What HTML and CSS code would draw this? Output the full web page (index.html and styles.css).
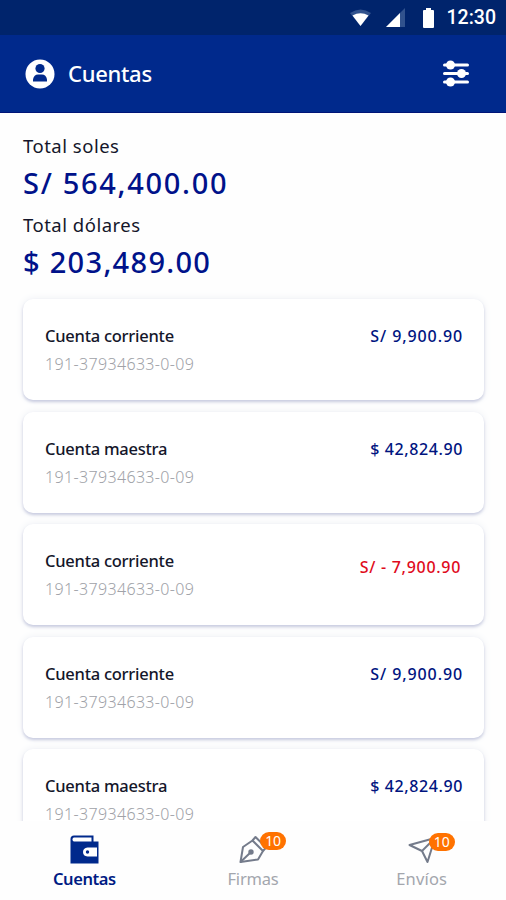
FILE: index.html
```html
<!DOCTYPE html>
<html lang="es">
<head>
  <meta charset="UTF-8">
  <title>Cuentas</title>
  <link rel="stylesheet" href="styles.css">
</head>
<body>

  <div class="status-bar">
    <svg class="wifi" width="21" height="17" viewBox="0 0 21 17">
      <path d="M0 4Q10.500-3 21 4L10.500 17Z" fill="#31528d"/>
      <path d="M2.500 6.500Q10.500 2 18.500 6.500L10.500 17Z" fill="#fff"/>
    </svg>
    <svg class="signal" width="19" height="19" viewBox="0 0 19 19">
      <path d="M0 19L19 0V19Z" fill="#31528d"/>
      <path d="M0 19L14 5V19Z" fill="#fff"/>
    </svg>
    <svg class="battery" width="11" height="20" viewBox="0 0 11 20">
      <path d="M3 0H8V2H10Q11 2 11 3V19Q11 20 10 20H1Q0 20 0 19V3Q0 2 1 2H3Z" fill="#fff"/>
    </svg>
    <span class="time">12:30</span>
  </div>

  <header class="header">
    <svg width="30" height="30" viewBox="0 0 30 30">
      <circle cx="15" cy="15" r="14.5" fill="#fff"/>
      <circle cx="15" cy="9.5" r="4.6" fill="#00298c"/>
      <path d="M8 22.5V20.5Q9 15.5 13 15.5H17Q21 15.5 22 20.5V22.5Z" fill="#00298c"/>
    </svg>
    <h1>Cuentas</h1>
    <svg class="filter" width="26" height="27" viewBox="0 0 26 27" fill="#fff" stroke="#fff" stroke-width="3" stroke-linecap="round">
      <path d="M1.5 5H24.5M1.5 13.5H24.5M1.5 22H24.5"/>
      <g stroke="none">
        <circle cx="7.5" cy="5" r="4.5"/>
        <circle cx="18.5" cy="13.5" r="4.5"/>
        <circle cx="7.5" cy="22" r="4.5"/>
      </g>
    </svg>
  </header>

  <main class="content">
    <section class="totals">
      <p class="label">Total soles</p>
      <p class="total">S/ 564,400.00</p>
      <p class="label">Total dólares</p>
      <p class="total dollars">$ 203,489.00</p>
    </section>

    <div class="card">
      <div>
        <p class="name">Cuenta corriente</p>
        <p class="number">191-37934633-0-09</p>
      </div>
      <span class="amount">S/ 9,900.90</span>
    </div>
    <div class="card">
      <div>
        <p class="name">Cuenta maestra</p>
        <p class="number">191-37934633-0-09</p>
      </div>
      <span class="amount dollars">$ 42,824.90</span>
    </div>
    <div class="card">
      <div>
        <p class="name">Cuenta corriente</p>
        <p class="number">191-37934633-0-09</p>
      </div>
      <span class="amount negative">S/ - 7,900.90</span>
    </div>
    <div class="card">
      <div>
        <p class="name">Cuenta corriente</p>
        <p class="number">191-37934633-0-09</p>
      </div>
      <span class="amount">S/ 9,900.90</span>
    </div>
    <div class="card">
      <div>
        <p class="name">Cuenta maestra</p>
        <p class="number">191-37934633-0-09</p>
      </div>
      <span class="amount dollars">$ 42,824.90</span>
    </div>
  </main>

  <nav class="tabs">
    <div class="tab active">
      <div class="icon">
        <svg width="30" height="30" viewBox="0 0 30 30">
          <path d="M1.500 5Q1.500 1.500 5 1.500H24.500V7.500H29.500V29.500H1.500Z" fill="#00298c"/>
          <path d="M5 3.500H22.500V7.500H5Q3.500 7.500 3.500 5.500T5 3.500Z" fill="#fff"/>
          <path d="M28 13.500H18.500Q14 14 14 18T18.500 22.500H28Z" fill="#fff"/>
          <circle cx="18.500" cy="18" r="1.700" fill="#00298c"/>
        </svg>
      </div>
      <span>Cuentas</span>
    </div>
    <div class="tab">
      <div class="icon">
        <svg width="30" height="30" viewBox="0 0 30 30" fill="none" stroke="#747b8b" stroke-width="2" stroke-linejoin="round">
          <path d="M2.500 28L5 13L14.500 6.500L25 17L20 25.500Z"/>
          <path d="M14.500 6.500L17.500 3L28 13.500L25 17M2.500 28L12.500 18.500"/>
          <circle cx="13" cy="18" r="1.700" fill="#747b8b"/>
        </svg>
        <span class="badge">10</span>
      </div>
      <span>Firmas</span>
    </div>
    <div class="tab">
      <div class="icon">
        <svg width="30" height="30" viewBox="0 0 30 30" fill="none" stroke="#747b8b" stroke-width="2" stroke-linejoin="round">
          <path d="M2.500 11L28 4L20.500 28L15 17Z"/>
          <path d="M15 17L28 4"/>
        </svg>
        <span class="badge sent">10</span>
      </div>
      <span class="wide">Envíos</span>
    </div>
  </nav>

</body>
</html>
```
FILE: styles.css
```css
* {
  box-sizing: border-box;
}

body {
  margin: 0;
  height: 900px;
  display: flex;
  flex-direction: column;
  overflow: hidden;
  background-color: #fefefe;
  color: #14162a;
  font-family: "Noto Sans", sans-serif;
}

p, h1 {
  margin: 0;
}

.status-bar {
  height: 35px;
  flex: none;
  display: flex;
  align-items: center;
  justify-content: flex-end;
  padding-right: 10px;
  background-color: #00246c;
  color: white;
}

.signal {
  margin-left: 15px;
}

.battery {
  margin-left: 18px;
}

.time {
  margin-left: 13px;
  font: 500 19.5px/35px Roboto, sans-serif;
}

.header {
  height: 78px;
  flex: none;
  display: flex;
  align-items: center;
  padding: 0 37px 0 25px;
  background-color: #00298c;
  border-bottom: 1px solid #001477;
  color: white;
}

.header h1 {
  margin: -2px 0 0 13px;
  font-size: 22px;
  font-weight: 500;
  letter-spacing: -0.3px;
}

.filter {
  margin-left: auto;
}

.content {
  flex: 1;
  min-height: 0;
  overflow: hidden;
  padding: 19px 22px 0 23px;
}

.totals {
  height: 167px;
}

.label {
  font-size: 18.5px;
  letter-spacing: 0.5px;
  line-height: 28px;
}

.total {
  height: 51px;
  color: #00128a;
  font-size: 29px;
  font-weight: 500;
  letter-spacing: 1.7px;
  line-height: 46px;
}

.total.dollars {
  letter-spacing: 1.3px;
}

.card {
  height: 101px;
  display: flex;
  align-items: flex-start;
  justify-content: space-between;
  margin-bottom: 11.5px;
  padding: 23px 22px 0;
  background-color: white;
  border-radius: 10px;
  box-shadow: 0 2px 3px #c9cce0, 0 0 8px #eef0f5;
}

.name {
  font-size: 16.5px;
  font-weight: 500;
  letter-spacing: -0.25px;
  line-height: 28px;
}

.number {
  color: #a0a2a8;
  font-size: 16px;
  font-weight: 300;
  letter-spacing: 0.35px;
  line-height: 28px;
}

.amount {
  margin-right: -1px;
  color: #00147f;
  font-size: 16px;
  font-weight: 500;
  letter-spacing: 0.9px;
  line-height: 28px;
}

.amount.dollars {
  letter-spacing: 0.6px;
}

.negative {
  margin: 6px 1px 0 0;
  color: #df0b1c;
  letter-spacing: 0.7px;
}

.tabs {
  height: 79px;
  flex: none;
  display: flex;
  background-color: #fefefe;
}

.tab {
  flex: 1;
  display: flex;
  flex-direction: column;
  align-items: center;
  padding-top: 13px;
  color: #a3a6ad;
  font-size: 16.5px;
  letter-spacing: -0.2px;
  line-height: 28px;
}

.active {
  color: #001b83;
  font-weight: 600;
  letter-spacing: -0.4px;
}

.wide {
  letter-spacing: 0.2px;
}

.icon {
  position: relative;
  height: 31px;
}

.icon svg {
  display: block;
}

.badge {
  position: absolute;
  top: -2px;
  left: 22px;
  width: 26px;
  height: 18px;
  border-radius: 9px;
  background-color: #ff7200;
  color: white;
  font-size: 14px;
  line-height: 18px;
  text-align: center;
}

.badge.sent {
  top: -1px;
}
```
